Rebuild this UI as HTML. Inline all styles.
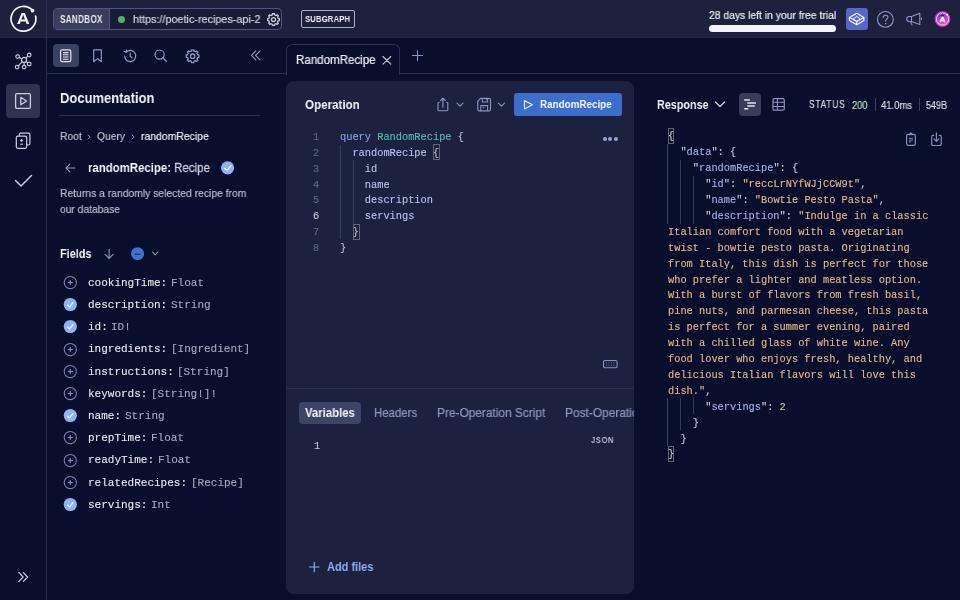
<!DOCTYPE html>
<html><head><meta charset="utf-8"><title>Apollo Sandbox</title>
<style>
html,body{margin:0;padding:0;}
body{width:960px;height:600px;overflow:hidden;position:relative;background:#080e2c;font-family:"Liberation Sans", sans-serif;}
.t{position:absolute;white-space:pre;will-change:transform;}
.m{font-family:"Liberation Mono", monospace;-webkit-text-stroke:0.12px currentColor;}
.r{position:absolute;}
.sr{-webkit-text-stroke:0.2px currentColor;}
.s{position:absolute;overflow:visible;}
</style></head><body>
<div class="r" style="left:0px;top:0px;width:960px;height:38px;background:#1e213d;"></div>
<div class="r" style="left:0px;top:37px;width:960px;height:1px;background:#23274a;"></div>
<div class="r" style="left:46px;top:0px;width:1px;height:600px;background:#2a2f4b;"></div>
<svg class="s" style="left:8px;top:4px;" width="30" height="30" viewBox="0 0 30 30" fill="none"><path d="M27.6 12.1 A12.4 12.4 0 1 1 24.64 6.42" stroke="#f4f4f8" stroke-width="1.7" stroke-linecap="round"/>
<circle cx="24.5" cy="6.7" r="1.9" fill="#f4f4f8"/>
<path d="M9.1 20 L13.6 9 L16.8 9 L21.3 20 L18.6 20 L17.7 17.5 L12.7 17.5 L11.8 20 Z M13.5 15.4 L16.9 15.4 L15.2 10.8 Z" fill="#f4f4f8"/></svg>
<div class="r" style="left:53px;top:8px;width:229px;height:22px;background:#191c37;border:1px solid #4b5684;border-radius:4px;box-sizing:border-box;"></div>
<div class="r" style="left:54px;top:9px;width:55px;height:20px;background:#3a3e5d;border-radius:3px 0 0 3px;"></div>
<div class="r" style="left:109px;top:9px;width:1px;height:20px;background:#4b5684;"></div>
<div class="t" style="left:60.00px;top:13.13px;font-size:10.1px;line-height:13.13px;font-family:'Liberation Sans', sans-serif;font-weight:700;color:#e6e8f0;transform:scaleX(0.8117);transform-origin:0 0;letter-spacing:0.3px;">SANDBOX</div>
<div class="r" style="left:117.5px;top:16px;width:7px;height:7px;border-radius:50%;background:#4fb36c"></div>
<div class="t sr" style="left:132.50px;top:12.14px;font-size:11.4px;line-height:14.82px;font-family:'Liberation Sans', sans-serif;font-weight:400;color:#d2d6e4;transform:scaleX(0.9491);transform-origin:0 0;">https://poetic-recipes-api-2</div>
<svg class="s" style="left:264px;top:10px;" width="19" height="19" viewBox="0 0 19 19" fill="none"><g transform="translate(9.5,9.6) scale(0.78)" stroke="#c9cde0" stroke-width="1.67" fill="none"><path d="M-1.3 -6.5 L1.3 -6.5 L1.7 -4.9 L3.3 -4.2 L4.7 -5.1 L6.1 -3.7 L5.2 -2.3 L5.9 -0.7 L7.5 -0.3 L7.5 2.3 L5.9 2.7 L5.2 4.3 L6.1 5.7 L4.7 7.1 L3.3 6.2 L1.7 6.9 L1.3 8.5 L-1.3 8.5 L-1.7 6.9 L-3.3 6.2 L-4.7 7.1 L-6.1 5.7 L-5.2 4.3 L-5.9 2.7 L-7.5 2.3 L-7.5 -0.3 L-5.9 -0.7 L-5.2 -2.3 L-6.1 -3.7 L-4.7 -5.1 L-3.3 -4.2 L-1.7 -4.9 Z" transform="translate(0,-1)"/><circle cx="0" cy="0" r="2.6"/></g></svg>
<div class="r" style="left:301px;top:10px;width:54px;height:18px;background:transparent;border:1px solid #a9adc0;border-radius:2px;box-sizing:border-box;"></div>
<div class="t" style="left:305.00px;top:13.23px;font-size:9.9px;line-height:12.87px;font-family:'Liberation Sans', sans-serif;font-weight:700;color:#f0f2f6;transform:scaleX(0.7776);transform-origin:0 0;letter-spacing:0.2px;">SUBGRAPH</div>
<div class="t sr" style="left:708.70px;top:8.44px;font-size:11.2px;line-height:14.56px;font-family:'Liberation Sans', sans-serif;font-weight:400;color:#eceef4;transform:scaleX(0.9253);transform-origin:0 0;">28 days left in your free trial</div>
<div class="r" style="left:708.5px;top:25px;width:127.5px;height:6.5px;background:#f3f4f8;border-radius:4px;"></div>
<div class="r" style="left:846px;top:8px;width:22px;height:22px;background:#5866c6;border-radius:3px;"></div>
<svg class="s" style="left:846px;top:8px;" width="22" height="22" viewBox="0 0 22 22" fill="none"><g stroke="#f4f6ff" stroke-width="1.15" stroke-linejoin="round">
<path d="M10.8 5.2 L3.4 9.5 L10.8 13.6 L17.9 9.5 Z"/>
<path d="M3.4 9.5 L3.4 12.4 L10.8 16.8 L17.9 12.4 L17.9 9.5 M10.8 13.6 L10.8 16.8"/>
<path d="M10.8 8.4 L7.4 10.9 L10.8 13.6 L14.3 10.9 Z" stroke-width="1"/></g></svg>
<svg class="s" style="left:876px;top:9.5px;" width="20" height="20" viewBox="0 0 20 20" fill="none"><circle cx="9.4" cy="9.4" r="7.9" stroke="#8f97c2" stroke-width="1.1"/>
<path d="M7.2 7.6 C7.2 5.9 8.3 5.2 9.6 5.2 C11 5.2 12 6.1 12 7.3 C12 8.9 9.7 9 9.7 11.2" stroke="#8f97c2" stroke-width="1.1" stroke-linecap="round"/>
<circle cx="9.7" cy="13.6" r="0.8" fill="#8f97c2"/></svg>
<svg class="s" style="left:904px;top:9px;" width="20" height="20" viewBox="0 0 20 20" fill="none"><path d="M7.5 7.5 L5.2 7.5 A2.5 2.5 0 0 0 5.2 12.5 L7.5 12.5 Z" stroke="#8f97c2" stroke-width="1.1" stroke-linejoin="round"/>
<path d="M7.5 7.5 L15.8 4.2 L15.8 15.5 L7.5 12.5" stroke="#8f97c2" stroke-width="1.1" stroke-linejoin="round"/>
<path d="M6.6 12.8 L8.1 16" stroke="#8f97c2" stroke-width="1.1" stroke-linecap="round"/>
<path d="M17.4 8.6 L17.4 11" stroke="#8f97c2" stroke-width="1"/></svg>
<svg class="s" style="left:933px;top:9px;" width="20" height="20" viewBox="0 0 20 20" fill="none"><defs><linearGradient id="av" x1="0" y1="0" x2="0.3" y2="1"><stop offset="0" stop-color="#8a30da"/><stop offset="1" stop-color="#e64cc6"/></linearGradient></defs>
<circle cx="9.5" cy="9.9" r="7.9" fill="url(#av)"/>
<circle cx="9.5" cy="9.9" r="6.1" stroke="#f2c6f2" stroke-width="1"/>
<path d="M7.1 13.1 L9.5 7.9 L11.9 13.1 M7.9 11.5 L11.1 11.5" stroke="#fff" stroke-width="1.6" stroke-linejoin="round"/>
<rect x="7.6" y="5.9" width="3.8" height="1.5" fill="#2c2f48"/>
<circle cx="14" cy="5.8" r="1" fill="#fff"/></svg>
<div class="r" style="left:0px;top:38px;width:46px;height:562px;background:#080e2c;"></div>
<svg class="s" style="left:13px;top:51px;" width="21" height="21" viewBox="0 0 21 21" fill="none"><g stroke="#c5c9dc" stroke-width="1.2"><circle cx="11.1" cy="8.9" r="2.5"/>
<circle cx="4.6" cy="5.6" r="1.8"/><circle cx="16.2" cy="4" r="1.8"/><circle cx="16.2" cy="12.9" r="1.8"/><circle cx="4.1" cy="16.1" r="1.8"/><circle cx="11.1" cy="16.1" r="1.8"/>
<path d="M6.2 6.4 L8.8 7.8 M14.8 5.2 L12.9 7.2 M14.6 12.1 L13.2 10.5 M5.4 14.8 L9.3 10.6 M11.1 14.3 L11.1 11.4"/></g></svg>
<div class="r" style="left:6px;top:84px;width:34px;height:34px;background:#2e3450;border-radius:4px;"></div>
<svg class="s" style="left:13px;top:90px;" width="21" height="21" viewBox="0 0 21 21" fill="none"><rect x="2.6" y="3.6" width="14.8" height="14.8" rx="1.3" stroke="#c9cde0" stroke-width="1.3"/>
<path d="M7.8 7.3 L13.6 11 L7.8 14.7 Z" stroke="#c9cde0" stroke-width="1.3" stroke-linejoin="round"/></svg>
<svg class="s" style="left:13px;top:128px;" width="21" height="22" viewBox="0 0 21 22" fill="none"><path d="M6.3 8.2 L6.3 6.6 Q6.3 5.1 7.8 5.1 L15.4 5.1 Q16.9 5.1 16.9 6.6 L16.9 15.5 Q16.9 17 15.4 17 L13.7 17" stroke="#c9cde0" stroke-width="1.2"/>
<rect x="3.3" y="8.2" width="10.4" height="12.1" rx="1.5" stroke="#c9cde0" stroke-width="1.2"/>
<path d="M8.6 10.9 Q8.9 12.2 10.2 12.5 Q8.9 12.8 8.6 14.1 Q8.3 12.8 7 12.5 Q8.3 12.2 8.6 10.9 Z" fill="#c9cde0" stroke="#c9cde0" stroke-width="0.5"/>
<path d="M7.2 16.2 L10 16.2" stroke="#c9cde0" stroke-width="1.1"/></svg>
<svg class="s" style="left:13px;top:170px;" width="21" height="21" viewBox="0 0 21 21" fill="none"><path d="M2.5 10.5 L8 16 L18.5 5.5" stroke="#c9cde0" stroke-width="1.5" stroke-linecap="round" stroke-linejoin="round"/></svg>
<svg class="s" style="left:15px;top:569px;" width="16" height="16" viewBox="0 0 16 16" fill="none"><path d="M3.9 3.6 L8.1 8 L3.9 12.4 M8.4 3.6 L12.6 8 L8.4 12.4" stroke="#c9cde0" stroke-width="1.3" stroke-linecap="round" stroke-linejoin="round"/></svg>
<div class="r" style="left:47px;top:38px;width:913px;height:562px;background:#080e2c;"></div>
<div class="r" style="left:47px;top:73px;width:239px;height:1px;background:#2a2f4b;"></div>
<div class="r" style="left:53px;top:44px;width:25.5px;height:23px;background:#3a4262;border-radius:4px;"></div>
<svg class="s" style="left:58px;top:48px;" width="15" height="15" viewBox="0 0 15 15" fill="none"><rect x="2.6" y="1.8" width="10.2" height="11.8" rx="1.6" stroke="#e0e3ee" stroke-width="1.2"/>
<path d="M5 4.6 L10.4 4.6 M5 6.8 L10.4 6.8 M5 9 L10.4 9 M5 11.2 L10.4 11.2" stroke="#e0e3ee" stroke-width="1.05"/></svg>
<svg class="s" style="left:90px;top:48px;" width="15" height="16" viewBox="0 0 15 16" fill="none"><path d="M3.7 1.9 L11.3 1.9 L11.3 13.6 L7.5 10.6 L3.7 13.6 Z" stroke="#8f97c2" stroke-width="1.2" stroke-linejoin="round"/></svg>
<svg class="s" style="left:121px;top:47px;" width="17" height="17" viewBox="0 0 17 17" fill="none"><path d="M3.6 9 A5.6 5.6 0 1 0 5.2 5" stroke="#8f97c2" stroke-width="1.2" stroke-linecap="round"/>
<path d="M3.3 4.6 L5.4 5.1 L5.6 3" stroke="#8f97c2" stroke-width="1.2" stroke-linecap="round" stroke-linejoin="round"/>
<path d="M9.2 6 L9.2 9.2 L11 10.8" stroke="#8f97c2" stroke-width="1.2" stroke-linecap="round"/></svg>
<svg class="s" style="left:152px;top:47px;" width="17" height="17" viewBox="0 0 17 17" fill="none"><circle cx="7.6" cy="7.6" r="4.6" stroke="#8f97c2" stroke-width="1.2"/><path d="M11 11 L14.5 14.5" stroke="#8f97c2" stroke-width="1.3" stroke-linecap="round"/></svg>
<svg class="s" style="left:183px;top:46px;" width="19" height="19" viewBox="0 0 19 19" fill="none"><g transform="translate(9.6,10.2) scale(0.85)" stroke="#8f97c2" stroke-width="1.53" fill="none"><path d="M-1.3 -6.5 L1.3 -6.5 L1.7 -4.9 L3.3 -4.2 L4.7 -5.1 L6.1 -3.7 L5.2 -2.3 L5.9 -0.7 L7.5 -0.3 L7.5 2.3 L5.9 2.7 L5.2 4.3 L6.1 5.7 L4.7 7.1 L3.3 6.2 L1.7 6.9 L1.3 8.5 L-1.3 8.5 L-1.7 6.9 L-3.3 6.2 L-4.7 7.1 L-6.1 5.7 L-5.2 4.3 L-5.9 2.7 L-7.5 2.3 L-7.5 -0.3 L-5.9 -0.7 L-5.2 -2.3 L-6.1 -3.7 L-4.7 -5.1 L-3.3 -4.2 L-1.7 -4.9 Z" transform="translate(0,-1)"/><circle cx="0" cy="0" r="2.6"/></g></svg>
<svg class="s" style="left:248px;top:49px;" width="15" height="14" viewBox="0 0 15 14" fill="none"><path d="M7.8 2 L3.4 6.4 L7.8 10.8 M12 2 L7.6 6.4 L12 10.8" stroke="#8f97c2" stroke-width="1.1" stroke-linecap="round" stroke-linejoin="round"/></svg>
<div class="t" style="left:59.50px;top:88.15px;font-size:15.2px;line-height:19.76px;font-family:'Liberation Sans', sans-serif;font-weight:700;color:#f2f4f8;transform:scaleX(0.8542);transform-origin:0 0;">Documentation</div>
<div class="r" style="left:59px;top:115px;width:201px;height:1px;background:#2a2f4b;"></div>
<div class="t sr" style="left:59.50px;top:128.74px;font-size:11.8px;line-height:15.34px;font-family:'Liberation Sans', sans-serif;font-weight:400;color:#b8bdd0;transform:scaleX(0.8746);transform-origin:0 0;">Root</div>
<svg class="s" style="left:85px;top:133px;" width="8" height="8" viewBox="0 0 8 8" fill="none"><path d="M2.8 1.8 L5.2 4 L2.8 6.2" stroke="#8a93c0" stroke-width="1"/></svg>
<div class="t sr" style="left:97.00px;top:128.74px;font-size:11.8px;line-height:15.34px;font-family:'Liberation Sans', sans-serif;font-weight:400;color:#b8bdd0;transform:scaleX(0.8714);transform-origin:0 0;">Query</div>
<svg class="s" style="left:129px;top:133px;" width="8" height="8" viewBox="0 0 8 8" fill="none"><path d="M2.8 1.8 L5.2 4 L2.8 6.2" stroke="#8a93c0" stroke-width="1"/></svg>
<div class="t sr" style="left:141.00px;top:128.74px;font-size:11.8px;line-height:15.34px;font-family:'Liberation Sans', sans-serif;font-weight:400;color:#eef0f5;transform:scaleX(0.8835);transform-origin:0 0;">randomRecipe</div>
<svg class="s" style="left:62px;top:161px;" width="15" height="14" viewBox="0 0 15 14" fill="none"><path d="M12.8 7 L4 7 M7.8 3.2 L4 7 L7.8 10.8" stroke="#8f97c2" stroke-width="1.1" stroke-linecap="round" stroke-linejoin="round"/></svg>
<div class="t" style="left:88.00px;top:159.04px;font-size:13.5px;line-height:17.55px;font-family:'Liberation Sans', sans-serif;font-weight:700;color:#f2f4f8;transform:scaleX(0.8446);transform-origin:0 0;">randomRecipe:</div>
<div class="t sr" style="left:174.00px;top:159.04px;font-size:13.5px;line-height:17.55px;font-family:'Liberation Sans', sans-serif;font-weight:400;color:#c9cee4;transform:scaleX(0.8567);transform-origin:0 0;-webkit-text-stroke:0.3px currentColor;">Recipe</div>
<svg class="s" style="left:219px;top:160px;" width="17" height="17" viewBox="0 0 17 17" fill="none"><circle cx="8.6" cy="7.8" r="6.6" fill="#8cb3f5"/><path d="M5.5 8.3 L8 10.3 L12 5.6" stroke="#fff" stroke-width="1.25" stroke-linecap="round" stroke-linejoin="round"/></svg>
<div class="t sr" style="left:59.50px;top:185.74px;font-size:11.8px;line-height:15.34px;font-family:'Liberation Sans', sans-serif;font-weight:400;color:#b8bdd0;transform:scaleX(0.8777);transform-origin:0 0;">Returns a randomly selected recipe from</div>
<div class="t sr" style="left:59.50px;top:201.54px;font-size:11.8px;line-height:15.34px;font-family:'Liberation Sans', sans-serif;font-weight:400;color:#b8bdd0;transform:scaleX(0.8710);transform-origin:0 0;">our database</div>
<div class="t" style="left:59.50px;top:244.64px;font-size:13.2px;line-height:17.16px;font-family:'Liberation Sans', sans-serif;font-weight:700;color:#f2f4f8;transform:scaleX(0.8258);transform-origin:0 0;">Fields</div>
<svg class="s" style="left:102px;top:246px;" width="14" height="15" viewBox="0 0 14 15" fill="none"><path d="M7.1 3.2 L7.1 12.2 M3.1 8.3 L7.1 12.3 L11.1 8.3" stroke="#8f97c2" stroke-width="1.1" stroke-linecap="round" stroke-linejoin="round"/></svg>
<svg class="s" style="left:130px;top:246px;" width="15" height="15" viewBox="0 0 15 15" fill="none"><circle cx="7.6" cy="7.7" r="6.5" fill="#3f72d4"/><path d="M5.2 8.2 L10 8.2" stroke="#2c3f6c" stroke-width="1.5" stroke-linecap="round"/></svg>
<svg class="s" style="left:151px;top:250px;" width="9" height="8" viewBox="0 0 9 8" fill="none"><path d="M1.6 2.2 L4.1 4.8 L6.7 2.2" stroke="#8f97c2" stroke-width="1.05" stroke-linecap="round" stroke-linejoin="round"/></svg>
<svg class="s" style="left:63px;top:275.0px;" width="15" height="15" viewBox="0 0 15 15" fill="none"><circle cx="7.3" cy="7.5" r="6.1" stroke="#7882b6" stroke-width="1.05"/><path d="M7.3 5 L7.3 10 M4.8 7.5 L9.8 7.5" stroke="#8a93c4" stroke-width="1.1"/></svg>
<div class="t m" style="left:88.00px;top:275.82px;font-size:11px;line-height:14.3px;font-family:'Liberation Mono', monospace;font-weight:400;color:#e4e6ee;">cookingTime:</div>
<div class="t m" style="left:170.70px;top:275.82px;font-size:11px;line-height:14.3px;font-family:'Liberation Mono', monospace;font-weight:400;color:#a3a9be;">Float</div>
<svg class="s" style="left:63px;top:297.2px;" width="15" height="15" viewBox="0 0 15 15" fill="none"><circle cx="7.3" cy="7.5" r="6.6" fill="#8cb3f5"/><path d="M4.5 8 L6.6 9.8 L10 5.6" stroke="#fff" stroke-width="1.15" stroke-linecap="round" stroke-linejoin="round"/></svg>
<div class="t m" style="left:88.00px;top:298.02px;font-size:11px;line-height:14.3px;font-family:'Liberation Mono', monospace;font-weight:400;color:#e4e6ee;">description:</div>
<div class="t m" style="left:170.70px;top:298.02px;font-size:11px;line-height:14.3px;font-family:'Liberation Mono', monospace;font-weight:400;color:#a3a9be;">String</div>
<svg class="s" style="left:63px;top:319.4px;" width="15" height="15" viewBox="0 0 15 15" fill="none"><circle cx="7.3" cy="7.5" r="6.6" fill="#8cb3f5"/><path d="M4.5 8 L6.6 9.8 L10 5.6" stroke="#fff" stroke-width="1.15" stroke-linecap="round" stroke-linejoin="round"/></svg>
<div class="t m" style="left:88.00px;top:320.22px;font-size:11px;line-height:14.3px;font-family:'Liberation Mono', monospace;font-weight:400;color:#e4e6ee;">id:</div>
<div class="t m" style="left:111.30px;top:320.22px;font-size:11px;line-height:14.3px;font-family:'Liberation Mono', monospace;font-weight:400;color:#a3a9be;">ID!</div>
<svg class="s" style="left:63px;top:341.6px;" width="15" height="15" viewBox="0 0 15 15" fill="none"><circle cx="7.3" cy="7.5" r="6.1" stroke="#7882b6" stroke-width="1.05"/><path d="M7.3 5 L7.3 10 M4.8 7.5 L9.8 7.5" stroke="#8a93c4" stroke-width="1.1"/></svg>
<div class="t m" style="left:88.00px;top:342.42px;font-size:11px;line-height:14.3px;font-family:'Liberation Mono', monospace;font-weight:400;color:#e4e6ee;">ingredients:</div>
<div class="t m" style="left:170.70px;top:342.42px;font-size:11px;line-height:14.3px;font-family:'Liberation Mono', monospace;font-weight:400;color:#a3a9be;">[Ingredient]</div>
<svg class="s" style="left:63px;top:363.8px;" width="15" height="15" viewBox="0 0 15 15" fill="none"><circle cx="7.3" cy="7.5" r="6.1" stroke="#7882b6" stroke-width="1.05"/><path d="M7.3 5 L7.3 10 M4.8 7.5 L9.8 7.5" stroke="#8a93c4" stroke-width="1.1"/></svg>
<div class="t m" style="left:88.00px;top:364.62px;font-size:11px;line-height:14.3px;font-family:'Liberation Mono', monospace;font-weight:400;color:#e4e6ee;">instructions:</div>
<div class="t m" style="left:177.30px;top:364.62px;font-size:11px;line-height:14.3px;font-family:'Liberation Mono', monospace;font-weight:400;color:#a3a9be;">[String]</div>
<svg class="s" style="left:63px;top:386.0px;" width="15" height="15" viewBox="0 0 15 15" fill="none"><circle cx="7.3" cy="7.5" r="6.1" stroke="#7882b6" stroke-width="1.05"/><path d="M7.3 5 L7.3 10 M4.8 7.5 L9.8 7.5" stroke="#8a93c4" stroke-width="1.1"/></svg>
<div class="t m" style="left:88.00px;top:386.82px;font-size:11px;line-height:14.3px;font-family:'Liberation Mono', monospace;font-weight:400;color:#e4e6ee;">keywords:</div>
<div class="t m" style="left:150.90px;top:386.82px;font-size:11px;line-height:14.3px;font-family:'Liberation Mono', monospace;font-weight:400;color:#a3a9be;">[String!]!</div>
<svg class="s" style="left:63px;top:408.2px;" width="15" height="15" viewBox="0 0 15 15" fill="none"><circle cx="7.3" cy="7.5" r="6.6" fill="#8cb3f5"/><path d="M4.5 8 L6.6 9.8 L10 5.6" stroke="#fff" stroke-width="1.15" stroke-linecap="round" stroke-linejoin="round"/></svg>
<div class="t m" style="left:88.00px;top:409.02px;font-size:11px;line-height:14.3px;font-family:'Liberation Mono', monospace;font-weight:400;color:#e4e6ee;">name:</div>
<div class="t m" style="left:124.50px;top:409.02px;font-size:11px;line-height:14.3px;font-family:'Liberation Mono', monospace;font-weight:400;color:#a3a9be;">String</div>
<svg class="s" style="left:63px;top:430.4px;" width="15" height="15" viewBox="0 0 15 15" fill="none"><circle cx="7.3" cy="7.5" r="6.1" stroke="#7882b6" stroke-width="1.05"/><path d="M7.3 5 L7.3 10 M4.8 7.5 L9.8 7.5" stroke="#8a93c4" stroke-width="1.1"/></svg>
<div class="t m" style="left:88.00px;top:431.22px;font-size:11px;line-height:14.3px;font-family:'Liberation Mono', monospace;font-weight:400;color:#e4e6ee;">prepTime:</div>
<div class="t m" style="left:150.90px;top:431.22px;font-size:11px;line-height:14.3px;font-family:'Liberation Mono', monospace;font-weight:400;color:#a3a9be;">Float</div>
<svg class="s" style="left:63px;top:452.6px;" width="15" height="15" viewBox="0 0 15 15" fill="none"><circle cx="7.3" cy="7.5" r="6.1" stroke="#7882b6" stroke-width="1.05"/><path d="M7.3 5 L7.3 10 M4.8 7.5 L9.8 7.5" stroke="#8a93c4" stroke-width="1.1"/></svg>
<div class="t m" style="left:88.00px;top:453.42px;font-size:11px;line-height:14.3px;font-family:'Liberation Mono', monospace;font-weight:400;color:#e4e6ee;">readyTime:</div>
<div class="t m" style="left:157.50px;top:453.42px;font-size:11px;line-height:14.3px;font-family:'Liberation Mono', monospace;font-weight:400;color:#a3a9be;">Float</div>
<svg class="s" style="left:63px;top:474.8px;" width="15" height="15" viewBox="0 0 15 15" fill="none"><circle cx="7.3" cy="7.5" r="6.1" stroke="#7882b6" stroke-width="1.05"/><path d="M7.3 5 L7.3 10 M4.8 7.5 L9.8 7.5" stroke="#8a93c4" stroke-width="1.1"/></svg>
<div class="t m" style="left:88.00px;top:475.62px;font-size:11px;line-height:14.3px;font-family:'Liberation Mono', monospace;font-weight:400;color:#e4e6ee;">relatedRecipes:</div>
<div class="t m" style="left:190.50px;top:475.62px;font-size:11px;line-height:14.3px;font-family:'Liberation Mono', monospace;font-weight:400;color:#a3a9be;">[Recipe]</div>
<svg class="s" style="left:63px;top:497.0px;" width="15" height="15" viewBox="0 0 15 15" fill="none"><circle cx="7.3" cy="7.5" r="6.6" fill="#8cb3f5"/><path d="M4.5 8 L6.6 9.8 L10 5.6" stroke="#fff" stroke-width="1.15" stroke-linecap="round" stroke-linejoin="round"/></svg>
<div class="t m" style="left:88.00px;top:497.82px;font-size:11px;line-height:14.3px;font-family:'Liberation Mono', monospace;font-weight:400;color:#e4e6ee;">servings:</div>
<div class="t m" style="left:150.90px;top:497.82px;font-size:11px;line-height:14.3px;font-family:'Liberation Mono', monospace;font-weight:400;color:#a3a9be;">Int</div>
<div class="r" style="left:286px;top:73px;width:674px;height:1px;background:#2a2f4b;"></div>
<div class="r" style="left:286px;top:44px;width:114px;height:31px;background:#080e2c;border:1px solid #2c3150;border-bottom:none;border-radius:6px 6px 0 0;box-sizing:border-box;"></div>
<div class="t sr" style="left:296.30px;top:52.54px;font-size:11.9px;line-height:15.47px;font-family:'Liberation Sans', sans-serif;font-weight:400;color:#eceef4;transform:scaleX(0.9717);transform-origin:0 0;">RandomRecipe</div>
<svg class="s" style="left:381px;top:54px;" width="12" height="12" viewBox="0 0 12 12" fill="none"><path d="M2 2.5 L9.8 10.2 M9.8 2.5 L2 10.2" stroke="#c6cad8" stroke-width="1.1" stroke-linecap="round"/></svg>
<svg class="s" style="left:411px;top:49px;" width="13" height="13" viewBox="0 0 13 13" fill="none"><path d="M6.5 1.5 L6.5 11.5 M1.5 6.5 L11.5 6.5" stroke="#8a93c0" stroke-width="1.1" stroke-linecap="round"/></svg>
<div class="r" style="left:286px;top:81px;width:348px;height:513px;background:#1d2140;border-radius:8px;"></div>
<div class="t" style="left:304.50px;top:96.24px;font-size:13.1px;line-height:17.03px;font-family:'Liberation Sans', sans-serif;font-weight:700;color:#f2f4f8;transform:scaleX(0.8858);transform-origin:0 0;">Operation</div>
<svg class="s" style="left:435px;top:95px;" width="16" height="18" viewBox="0 0 16 18" fill="none"><path d="M4.4 7.3 L3.9 7.3 Q3 7.3 3 8.3 L3 14.8 Q3 15.7 3.9 15.7 L11.9 15.7 Q12.8 15.7 12.8 14.8 L12.8 8.3 Q12.8 7.3 11.9 7.3 L11.4 7.3" stroke="#8a93c0" stroke-width="1.15" stroke-linejoin="round"/>
<path d="M7.9 12.2 L7.9 3.4 M5.4 5.7 L7.9 3.1 L10.4 5.7" stroke="#8a93c0" stroke-width="1.15" stroke-linecap="round" stroke-linejoin="round"/></svg>
<svg class="s" style="left:455px;top:101px;" width="10" height="8" viewBox="0 0 10 8" fill="none"><path d="M2 2.2 L5 5.1 L8 2.2" stroke="#8a93c0" stroke-width="1.15" stroke-linecap="round" stroke-linejoin="round"/></svg>
<svg class="s" style="left:476px;top:96px;" width="17" height="17" viewBox="0 0 17 17" fill="none"><path d="M4.6 2.3 L13 2.3 Q14.5 2.3 14.5 3.8 L14.5 13.4 Q14.5 14.9 13 14.9 L3.3 14.9 Q1.8 14.9 1.8 13.4 L1.8 5.1 Z" stroke="#8a93c0" stroke-width="1.15" stroke-linejoin="round"/>
<path d="M6.3 2.3 L6.3 6 L11.6 6 L11.6 2.3 M9.8 3.6 L10.6 3.6 M4.8 14.9 L4.8 9.6 L11.6 9.6 L11.6 14.9 M6.7 11.8 L8.3 11.8" stroke="#8a93c0" stroke-width="1.05"/></svg>
<svg class="s" style="left:496px;top:101px;" width="10" height="8" viewBox="0 0 10 8" fill="none"><path d="M2.5 2.2 L5.5 5.1 L8.5 2.2" stroke="#8a93c0" stroke-width="1.15" stroke-linecap="round" stroke-linejoin="round"/></svg>
<div class="r" style="left:514px;top:93px;width:108px;height:23px;background:#3d6ecb;border-radius:3px;"></div>
<svg class="s" style="left:521px;top:96px;" width="15" height="16" viewBox="0 0 15 16" fill="none"><path d="M3.5 4.6 L11.4 8.8 L3.5 13 Z" stroke="#dfe6f6" stroke-width="1.2" stroke-linejoin="round"/></svg>
<div class="t" style="left:540.00px;top:96.94px;font-size:11.4px;line-height:14.82px;font-family:'Liberation Sans', sans-serif;font-weight:700;color:#f4f6fb;transform:scaleX(0.8652);transform-origin:0 0;">RandomRecipe</div>
<div class="t m" style="left:313.2px;top:129.65px;font-size:10.33px;line-height:15.8px;"><span style="color:#5f6789">1</span></div>
<div class="t m" style="left:340px;top:129.65px;font-size:10.33px;line-height:15.8px;"><span style="color:#8b9de8">query </span><span style="color:#52bdb2">RandomRecipe</span><span style="color:#b9bccb"> {</span></div>
<div class="t m" style="left:313.2px;top:145.60px;font-size:10.33px;line-height:15.8px;"><span style="color:#5f6789">2</span></div>
<div class="t m" style="left:340px;top:145.60px;font-size:10.33px;line-height:15.8px;"><span style="color:#b9c1ea">  randomRecipe</span><span style="color:#b9bccb"> {</span></div>
<div class="t m" style="left:313.2px;top:161.55px;font-size:10.33px;line-height:15.8px;"><span style="color:#5f6789">3</span></div>
<div class="t m" style="left:340px;top:161.55px;font-size:10.33px;line-height:15.8px;"><span style="color:#b9c1ea">    id</span></div>
<div class="t m" style="left:313.2px;top:177.50px;font-size:10.33px;line-height:15.8px;"><span style="color:#5f6789">4</span></div>
<div class="t m" style="left:340px;top:177.50px;font-size:10.33px;line-height:15.8px;"><span style="color:#b9c1ea">    name</span></div>
<div class="t m" style="left:313.2px;top:193.45px;font-size:10.33px;line-height:15.8px;"><span style="color:#5f6789">5</span></div>
<div class="t m" style="left:340px;top:193.45px;font-size:10.33px;line-height:15.8px;"><span style="color:#b9c1ea">    description</span></div>
<div class="t m" style="left:313.2px;top:209.40px;font-size:10.33px;line-height:15.8px;"><span style="color:#c8cad6">6</span></div>
<div class="t m" style="left:340px;top:209.40px;font-size:10.33px;line-height:15.8px;"><span style="color:#b9c1ea">    servings</span></div>
<div class="t m" style="left:313.2px;top:225.35px;font-size:10.33px;line-height:15.8px;"><span style="color:#5f6789">7</span></div>
<div class="t m" style="left:340px;top:225.35px;font-size:10.33px;line-height:15.8px;"><span style="color:#b9bccb">  }</span></div>
<div class="t m" style="left:313.2px;top:241.30px;font-size:10.33px;line-height:15.8px;"><span style="color:#5f6789">8</span></div>
<div class="t m" style="left:340px;top:241.30px;font-size:10.33px;line-height:15.8px;"><span style="color:#b9bccb">}</span></div>
<div class="r" style="left:340px;top:145px;width:1px;height:94px;background:#383e5e;"></div>
<div class="r" style="left:353px;top:160px;width:1px;height:64px;background:#383e5e;"></div>
<div class="r" style="left:433px;top:144px;width:7px;height:16px;background:transparent;border:1px solid #5e6474;box-sizing:border-box;"></div>
<div class="r" style="left:353px;top:224px;width:7px;height:16px;background:transparent;border:1px solid #5e6474;box-sizing:border-box;"></div>
<div class="r" style="left:602.8px;top:137.2px;width:4px;height:4px;border-radius:50%;background:#98a2d8"></div>
<div class="r" style="left:608.3px;top:137.2px;width:4px;height:4px;border-radius:50%;background:#98a2d8"></div>
<div class="r" style="left:613.8px;top:137.2px;width:4px;height:4px;border-radius:50%;background:#98a2d8"></div>
<svg class="s" style="left:602px;top:359px;" width="16" height="11" viewBox="0 0 16 11" fill="none"><rect x="1.5" y="1.5" width="13.6" height="7.3" rx="1.6" stroke="#8a93c0" stroke-width="1.05"/>
<path d="M4 3.9 L4.8 3.9 M6.5 3.9 L7.3 3.9 M9 3.9 L9.8 3.9 M11.5 3.9 L12.3 3.9 M4 6.3 L4.8 6.3 M6.5 6.3 L7.3 6.3 M9 6.3 L9.8 6.3 M11.5 6.3 L12.3 6.3" stroke="#8a93c0" stroke-width="0.9"/></svg>
<div class="r" style="left:286px;top:388px;width:348px;height:1px;background:#2c3150;"></div>
<div class="r" style="left:298.5px;top:401.5px;width:62.5px;height:22.5px;background:#3c4567;border-radius:4px;"></div>
<div class="t" style="left:304.80px;top:405.14px;font-size:12.4px;line-height:16.12px;font-family:'Liberation Sans', sans-serif;font-weight:700;color:#f2f4f8;transform:scaleX(0.9144);transform-origin:0 0;">Variables</div>
<div class="t sr" style="left:374.10px;top:405.14px;font-size:12.4px;line-height:16.12px;font-family:'Liberation Sans', sans-serif;font-weight:400;color:#8f97bd;transform:scaleX(0.9195);transform-origin:0 0;">Headers</div>
<div class="t sr" style="left:436.70px;top:405.14px;font-size:12.4px;line-height:16.12px;font-family:'Liberation Sans', sans-serif;font-weight:400;color:#8f97bd;transform:scaleX(0.9591);transform-origin:0 0;">Pre-Operation Script</div>
<div class="r" style="left:564px;top:400px;width:70px;height:24px;overflow:hidden;background:transparent">
<div class="t sr" style="left:0.60px;top:5.14px;font-size:12.4px;line-height:16.12px;font-family:'Liberation Sans', sans-serif;font-weight:400;color:#8f97bd;transform:scaleX(0.9617);transform-origin:0 0;">Post-Operation Script</div>
</div>
<div class="t m" style="left:313.5px;top:438.55px;font-size:10.33px;line-height:15.8px;"><span style="color:#c8cad6">1</span></div>
<div class="t" style="left:591.40px;top:435.13px;font-size:9.2px;line-height:11.96px;font-family:'Liberation Sans', sans-serif;font-weight:700;color:#b7bcd4;transform:scaleX(0.8257);transform-origin:0 0;letter-spacing:0.7px;">JSON</div>
<svg class="s" style="left:307px;top:560px;" width="14" height="14" viewBox="0 0 14 14" fill="none"><path d="M7.3 2.3 L7.3 11.7 M2.6 7 L12 7" stroke="#8db1f2" stroke-width="1.1" stroke-linecap="round"/></svg>
<div class="t" style="left:326.80px;top:559.04px;font-size:12.8px;line-height:16.64px;font-family:'Liberation Sans', sans-serif;font-weight:700;color:#8db1f2;transform:scaleX(0.8584);transform-origin:0 0;">Add files</div>
<div class="t" style="left:656.70px;top:95.84px;font-size:13.5px;line-height:17.55px;font-family:'Liberation Sans', sans-serif;font-weight:700;color:#f2f4f8;transform:scaleX(0.7997);transform-origin:0 0;">Response</div>
<svg class="s" style="left:714px;top:100px;" width="12" height="9" viewBox="0 0 12 9" fill="none"><path d="M1.5 2 L6 6.5 L10.5 2" stroke="#d8dbe6" stroke-width="1.2" stroke-linecap="round" stroke-linejoin="round"/></svg>
<div class="r" style="left:739px;top:93px;width:22px;height:23px;background:#363c5a;border-radius:4px;"></div>
<svg class="s" style="left:743px;top:97px;" width="15" height="15" viewBox="0 0 15 15" fill="none"><path d="M1.2 3 L6.9 3 M4.3 6 L12.9 6 M4.3 8.9 L11.8 8.9 M1.2 11.8 L5.3 11.8" stroke="#e0e3ee" stroke-width="1.5"/></svg>
<svg class="s" style="left:771px;top:97px;" width="15" height="15" viewBox="0 0 15 15" fill="none"><rect x="2" y="1.7" width="11.3" height="11.5" rx="1.5" stroke="#8a93c0" stroke-width="1.2"/><path d="M2 5.3 L13.3 5.3 M2 9.5 L13.3 9.5 M6.4 1.7 L6.4 13.2" stroke="#8a93c0" stroke-width="1.1"/></svg>
<div class="t sr" style="left:809.00px;top:98.33px;font-size:10.2px;line-height:13.26px;font-family:'Liberation Sans', sans-serif;font-weight:400;color:#d2d5e0;transform:scaleX(0.8161);transform-origin:0 0;letter-spacing:1.0px;">STATUS</div>
<div class="t sr" style="left:851.70px;top:98.53px;font-size:10px;line-height:13.0px;font-family:'Liberation Sans', sans-serif;font-weight:400;color:#b7d9c0;transform:scaleX(0.9350);transform-origin:0 0;">200</div>
<div class="r" style="left:875px;top:98px;width:1px;height:13px;background:#3a3f5c;"></div>
<div class="t sr" style="left:880.70px;top:98.53px;font-size:10px;line-height:13.0px;font-family:'Liberation Sans', sans-serif;font-weight:400;color:#d8dbe6;transform:scaleX(0.9453);transform-origin:0 0;">41.0ms</div>
<div class="r" style="left:919px;top:98px;width:1px;height:13px;background:#3a3f5c;"></div>
<div class="t sr" style="left:925.70px;top:98.53px;font-size:10px;line-height:13.0px;font-family:'Liberation Sans', sans-serif;font-weight:400;color:#d8dbe6;transform:scaleX(0.8991);transform-origin:0 0;">549B</div>
<svg class="s" style="left:903px;top:131px;" width="15" height="17" viewBox="0 0 15 17" fill="none"><rect x="3.6" y="3.4" width="8.7" height="11" rx="1.6" stroke="#8a93c0" stroke-width="1.15"/>
<path d="M6.3 3.6 L7.9 1.9 L9.5 3.6 Z" stroke="#8a93c0" stroke-width="1.1" stroke-linejoin="round" fill="#8a93c0"/>
<path d="M5.9 7.3 L10 7.3 M5.9 9.1 L10 9.1 M5.9 10.9 L8.3 10.9" stroke="#8a93c0" stroke-width="0.9"/></svg>
<svg class="s" style="left:928px;top:131px;" width="16" height="17" viewBox="0 0 16 17" fill="none"><path d="M6 4.4 L5 4.4 Q3.7 4.4 3.7 5.7 L3.7 13.2 Q3.7 14.5 5 14.5 L11.9 14.5 Q13.2 14.5 13.2 13.2 L13.2 5.7 Q13.2 4.4 11.9 4.4 L10.9 4.4" stroke="#8a93c0" stroke-width="1.15" stroke-linejoin="round"/>
<path d="M8.4 1.8 L8.4 10.2 M6 7.9 L8.4 10.3 L10.8 7.9" stroke="#8a93c0" stroke-width="1.15" stroke-linecap="round" stroke-linejoin="round"/></svg>
<div class="t m" style="left:667.7px;top:129.45px;font-size:10.33px;line-height:15.8px;"><span style="color:#c8cad6">{</span></div>
<div class="t m" style="left:667.7px;top:145.35px;font-size:10.33px;line-height:15.8px;"><span style="color:#c8cad6">  </span><span style="color:#c5cade">&quot;</span><span style="color:#a3b1e6">data</span><span style="color:#c5cade">&quot;</span><span style="color:#c8cad6">: {</span></div>
<div class="t m" style="left:667.7px;top:161.25px;font-size:10.33px;line-height:15.8px;"><span style="color:#c8cad6">    </span><span style="color:#c5cade">&quot;</span><span style="color:#a3b1e6">randomRecipe</span><span style="color:#c5cade">&quot;</span><span style="color:#c8cad6">: {</span></div>
<div class="t m" style="left:667.7px;top:177.15px;font-size:10.33px;line-height:15.8px;"><span style="color:#c8cad6">      </span><span style="color:#c5cade">&quot;</span><span style="color:#a3b1e6">id</span><span style="color:#c5cade">&quot;</span><span style="color:#c8cad6">: </span><span style="color:#e4b48c">&quot;reccLrNYfWJjCCW9t&quot;</span><span style="color:#c8cad6">,</span></div>
<div class="t m" style="left:667.7px;top:193.05px;font-size:10.33px;line-height:15.8px;"><span style="color:#c8cad6">      </span><span style="color:#c5cade">&quot;</span><span style="color:#a3b1e6">name</span><span style="color:#c5cade">&quot;</span><span style="color:#c8cad6">: </span><span style="color:#e4b48c">&quot;Bowtie Pesto Pasta&quot;</span><span style="color:#c8cad6">,</span></div>
<div class="t m" style="left:667.7px;top:208.95px;font-size:10.33px;line-height:15.8px;"><span style="color:#c8cad6">      </span><span style="color:#c5cade">&quot;</span><span style="color:#a3b1e6">description</span><span style="color:#c5cade">&quot;</span><span style="color:#c8cad6">: </span><span style="color:#e4b48c">&quot;Indulge in a classic</span></div>
<div class="t m" style="left:667.7px;top:224.85px;font-size:10.33px;line-height:15.8px;"><span style="color:#e4b48c">Italian comfort food with a vegetarian</span></div>
<div class="t m" style="left:667.7px;top:240.75px;font-size:10.33px;line-height:15.8px;"><span style="color:#e4b48c">twist - bowtie pesto pasta. Originating</span></div>
<div class="t m" style="left:667.7px;top:256.65px;font-size:10.33px;line-height:15.8px;"><span style="color:#e4b48c">from Italy, this dish is perfect for those</span></div>
<div class="t m" style="left:667.7px;top:272.55px;font-size:10.33px;line-height:15.8px;"><span style="color:#e4b48c">who prefer a lighter and meatless option.</span></div>
<div class="t m" style="left:667.7px;top:288.45px;font-size:10.33px;line-height:15.8px;"><span style="color:#e4b48c">With a burst of flavors from fresh basil,</span></div>
<div class="t m" style="left:667.7px;top:304.35px;font-size:10.33px;line-height:15.8px;"><span style="color:#e4b48c">pine nuts, and parmesan cheese, this pasta</span></div>
<div class="t m" style="left:667.7px;top:320.25px;font-size:10.33px;line-height:15.8px;"><span style="color:#e4b48c">is perfect for a summer evening, paired</span></div>
<div class="t m" style="left:667.7px;top:336.15px;font-size:10.33px;line-height:15.8px;"><span style="color:#e4b48c">with a chilled glass of white wine. Any</span></div>
<div class="t m" style="left:667.7px;top:352.05px;font-size:10.33px;line-height:15.8px;"><span style="color:#e4b48c">food lover who enjoys fresh, healthy, and</span></div>
<div class="t m" style="left:667.7px;top:367.95px;font-size:10.33px;line-height:15.8px;"><span style="color:#e4b48c">delicious Italian flavors will love this</span></div>
<div class="t m" style="left:667.7px;top:383.85px;font-size:10.33px;line-height:15.8px;"><span style="color:#e4b48c">dish.&quot;</span><span style="color:#c8cad6">,</span></div>
<div class="t m" style="left:667.7px;top:399.75px;font-size:10.33px;line-height:15.8px;"><span style="color:#c8cad6">      </span><span style="color:#c5cade">&quot;</span><span style="color:#a3b1e6">servings</span><span style="color:#c5cade">&quot;</span><span style="color:#c8cad6">: </span><span style="color:#dccaa6">2</span></div>
<div class="t m" style="left:667.7px;top:415.65px;font-size:10.33px;line-height:15.8px;"><span style="color:#c8cad6">    }</span></div>
<div class="t m" style="left:667.7px;top:431.55px;font-size:10.33px;line-height:15.8px;"><span style="color:#c8cad6">  }</span></div>
<div class="t m" style="left:667.7px;top:447.45px;font-size:10.33px;line-height:15.8px;"><span style="color:#c8cad6">}</span></div>
<div class="r" style="left:667px;top:144px;width:1px;height:80px;background:#3a4470;"></div>
<div class="r" style="left:667px;top:398px;width:1px;height:48px;background:#3a4470;"></div>
<div class="r" style="left:680px;top:160px;width:1px;height:64px;background:#353b5c;"></div>
<div class="r" style="left:680px;top:398px;width:1px;height:32px;background:#353b5c;"></div>
<div class="r" style="left:692.5px;top:176px;width:1.0px;height:48px;background:#353b5c;"></div>
<div class="r" style="left:692.5px;top:398px;width:1.0px;height:16px;background:#353b5c;"></div>
<div class="r" style="left:668px;top:128px;width:6px;height:16px;background:transparent;border:1px solid #5e6474;box-sizing:border-box;"></div>
<div class="r" style="left:668px;top:446px;width:6px;height:16px;background:transparent;border:1px solid #5e6474;box-sizing:border-box;"></div>
</body></html>
